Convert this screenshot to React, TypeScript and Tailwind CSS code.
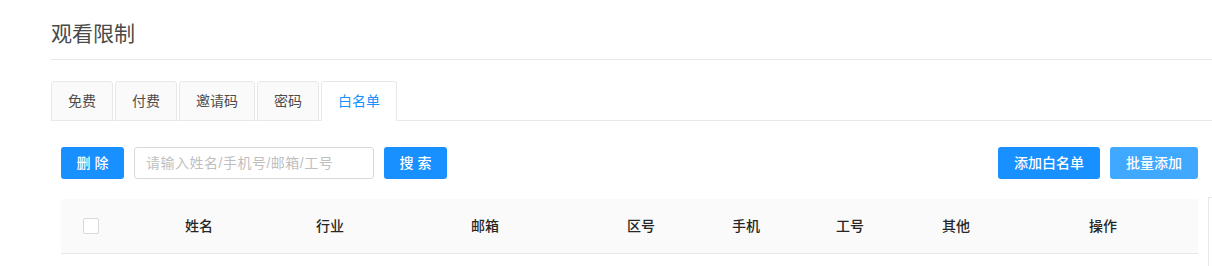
const tabs = ["免费", "付费", "邀请码", "密码", "白名单"];

const columns: { label: string; className: string }[] = [
	{ label: "姓名", className: "w-[120px]" },
	{ label: "行业", className: "w-[142px]" },
	{ label: "邮箱", className: "w-[168px]" },
	{ label: "区号", className: "w-[144px]" },
	{ label: "手机", className: "w-[66px]" },
	{ label: "工号", className: "w-[142px]" },
	{ label: "其他", className: "w-[70px]" },
	{ label: "操作", className: "flex-1 pl-[17px]" },
];

export default function App() {
	const active = "白名单";

	return (
		<div
			className="w-[1212px] h-[266px] overflow-hidden bg-white pl-[51px] text-[14px]"
			style={{ fontFamily: '"Liberation Sans", "Noto Sans CJK SC", sans-serif' }}
		>
			{/* Title */}
			<div className="pt-[20px] pb-[11px] border-b border-[#e8e8e8]">
				<h1 className="h-[28px] leading-[28px] text-[21px] text-[#4a4a4a]">观看限制</h1>
			</div>

			{/* Tabs */}
			<div className="mt-[21px] flex h-[40px] border-b border-[#e8e8e8]">
				{tabs.map((t) => (
					<div
						key={t}
						className={
							t === active
								? "-mb-px mr-[2px] flex h-[40px] items-center rounded-t-[3px] border border-[#e8e8e8] border-b-white bg-white px-[16px] text-[#1890ff]"
								: "-mb-px mr-[2px] flex h-[40px] items-center rounded-t-[3px] border border-[#e8e8e8] bg-[#fafafa] px-[16px] text-[#4d4d4d]"
						}
					>
						{t}
					</div>
				))}
			</div>

			<div className="pl-[10px]">
				{/* Toolbar */}
				<div className="mt-[26px] flex h-[32px] w-[1137px] items-center gap-[10px]">
					<button className="h-[32px] w-[63px] rounded-[3px] bg-[#1890ff] font-medium text-white">删 除</button>
					<input
						placeholder="请输入姓名/手机号/邮箱/工号"
						className="h-[32px] w-[240px] rounded-[3px] border border-[#d9d9d9] px-[11px] text-[14px] tracking-[0.5px] text-[#595959] placeholder:text-[#bfbfbf] outline-none"
					/>
					<button className="h-[32px] w-[63px] rounded-[3px] bg-[#1890ff] font-medium text-white">搜 索</button>
					<div className="flex-1" />
					<button className="h-[32px] w-[102px] rounded-[3px] bg-[#1890ff] font-medium text-white">添加白名单</button>
					<button className="h-[32px] w-[88px] rounded-[3px] bg-[#40a9ff] font-medium text-white">批量添加</button>
				</div>

				{/* Table header */}
				<div className="mt-[20px] flex">
					<div className="flex h-[55px] w-[1137px] items-center border-b border-[#e8e8e8] bg-[#fafafa] font-medium text-[#262626]">
						<div className="w-[78px] pl-[22px]">
							<div className="h-[16px] w-[16px] rounded-[2px] border border-[#d9d9d9] bg-white" />
						</div>
						{columns.map((c) => (
							<div key={c.label} className={`${c.className} text-center`}>
								{c.label}
							</div>
						))}
					</div>
					<div className="-mt-[2px] ml-[10px] h-[80px] flex-1 border-l border-t border-[#e8e8e8]" />
				</div>
			</div>
		</div>
	);
}
